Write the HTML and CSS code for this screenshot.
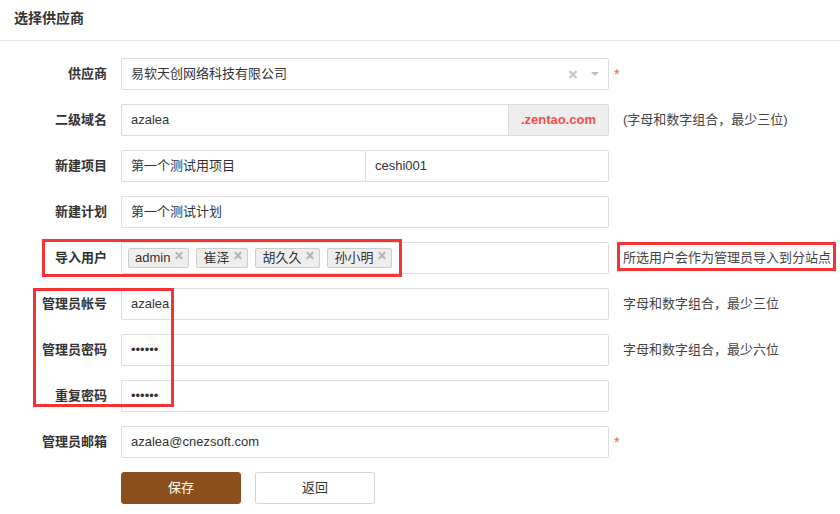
FILE: index.html
```html
<!DOCTYPE html>
<html lang="zh-CN">
<head>
<meta charset="utf-8">
<title>选择供应商</title>
<link rel="stylesheet" href="styles.css">
</head>
<body>
<div class="page">
  <div class="header">选择供应商</div>
  <div class="form">
    <div class="row">
      <div class="label">供应商</div>
      <div class="control select">
        <span class="val">易软天创网络科技有限公司</span>
        <span class="clear"><svg width="10" height="9" viewBox="0 0 10 9"><path d="M1.5 1 L8.5 8 M8.5 1 L1.5 8" stroke="#c8c8c8" stroke-width="2.4" stroke-linecap="butt"/></svg></span>
        <span class="caret"><svg width="8" height="4" viewBox="0 0 8 4"><path d="M0 0 H8 L4 4 Z" fill="#bdbdbd"/></svg></span>
      </div>
      <span class="req">*</span>
    </div>
    <div class="row">
      <div class="label">二级域名</div>
      <div class="group">
        <div class="control grow">azalea</div>
        <div class="addon">.zentao.com</div>
      </div>
      <span class="hint">(字母和数字组合，最少三位)</span>
    </div>
    <div class="row">
      <div class="label">新建项目</div>
      <div class="group">
        <div class="control half">第一个测试用项目</div>
        <div class="control grow joined">ceshi001</div>
      </div>
    </div>
    <div class="row">
      <div class="label">新建计划</div>
      <div class="control">第一个测试计划</div>
    </div>
    <div class="row">
      <div class="label">导入用户</div>
      <div class="control chips">
        <span class="chip">admin<i class="x"></i></span>
        <span class="chip">崔泽<i class="x"></i></span>
        <span class="chip">胡久久<i class="x"></i></span>
        <span class="chip">孙小明<i class="x"></i></span>
      </div>
      <span class="hint">所选用户会作为管理员导入到分站点</span>
    </div>
    <div class="row">
      <div class="label">管理员帐号</div>
      <div class="control">azalea</div>
      <span class="hint">字母和数字组合，最少三位</span>
    </div>
    <div class="row">
      <div class="label">管理员密码</div>
      <div class="control pwd">••••••</div>
      <span class="hint">字母和数字组合，最少六位</span>
    </div>
    <div class="row">
      <div class="label">重复密码</div>
      <div class="control pwd">••••••</div>
    </div>
    <div class="row">
      <div class="label">管理员邮箱</div>
      <div class="control">azalea@cnezsoft.com</div>
      <span class="req">*</span>
    </div>
    <div class="row actions">
      <button class="btn primary">保存</button>
      <button class="btn">返回</button>
    </div>
  </div>
  <div class="mark mark-users"></div>
  <div class="mark mark-hint"></div>
  <div class="mark mark-labels"></div>
</div>
</body>
</html>
```
FILE: styles.css
```css
* { box-sizing: border-box; }
html, body { margin: 0; padding: 0; background: #fff; }
body {
  font-family: "Liberation Sans", "Noto Sans CJK SC", sans-serif;
  font-size: 13px;
  color: #333;
}
.page { position: relative; width: 840px; height: 514px; overflow: hidden; }
.header {
  height: 41px;
  padding: 0 0 4px 14px;
  line-height: 36px;
  font-size: 14px;
  font-weight: bold;
  border-bottom: 1px solid #e8e8e8;
}
.form {
  display: flex;
  flex-direction: column;
  gap: 14px;
  padding-top: 17px;
}
.row {
  display: flex;
  align-items: center;
  height: 32px;
  line-height: 30px;
}
.label {
  width: 107px;
  text-align: right;
  font-weight: bold;
  margin-right: 14px;
  flex: none;
}
.control {
  width: 488px;
  height: 32px;
  border: 1px solid #dcdcdc;
  border-radius: 2px;
  padding: 0 9px;
  line-height: 30px;
  white-space: nowrap;
  flex: none;
}
.group { display: flex; width: 488px; flex: none; }
.group .control { width: auto; }
.control.grow { flex: 1; }
.control.half { width: 245px; flex: none; }
.control.joined { margin-left: -1px; }
.group .control.grow:not(.joined) { border-right: none; border-radius: 2px 0 0 2px; }
.addon {
  width: 101px;
  height: 32px;
  line-height: 30px;
  text-align: center;
  background: #eeeeee;
  border: 1px solid #dcdcdc;
  border-radius: 0 2px 2px 0;
  color: #f44d4d;
  font-weight: bold;
}
.select { display: flex; align-items: center; }
.select .val { flex: 1; }
.clear { display: flex; margin-right: 13px; }
.caret { display: flex; margin-right: 0; }
.req {
  color: #f55;
  margin-left: 5px;
  font-size: 15px;
  line-height: 20px;
  align-self: flex-start;
  margin-top: 6px;
}
.hint { margin-left: 14px; color: #444; white-space: nowrap; }
.chips { display: flex; align-items: center; gap: 7px; padding: 0 6px; }
.chip {
  display: inline-flex;
  align-items: center;
  height: 20px;
  padding: 0 6px;
  border: 1px solid #ccc;
  border-radius: 2px;
  background: #eeeeee;
  line-height: 18px;
}
.x {
  display: inline-block;
  width: 7px;
  height: 7px;
  margin-left: 5px;
  margin-top: -6px;
  position: relative;
}
.x::before, .x::after {
  content: "";
  position: absolute;
  left: 2.5px;
  top: -1px;
  width: 2px;
  height: 9px;
  background: #b5b5b5;
}
.x::before { transform: rotate(45deg); }
.x::after { transform: rotate(-45deg); }
.actions { padding-left: 121px; gap: 14px; }
.btn {
  width: 120px;
  height: 32px;
  border: 1px solid #d5d5d5;
  border-radius: 3px;
  background: #fff;
  color: #333;
  font-family: inherit;
  font-size: 13px;
  line-height: 30px;
  padding: 0;
}
.btn.primary {
  background: #8b4f1e;
  border-color: #8b4f1e;
  color: #fff;
}
.mark {
  position: absolute;
  border: 3px solid #f53333;
  pointer-events: none;
}
.mark-users { left: 42px; top: 239px; width: 360px; height: 38px; }
.mark-hint { left: 617px; top: 242px; width: 219px; height: 29px; }
.mark-labels { left: 33px; top: 288px; width: 141px; height: 119px; }
```
